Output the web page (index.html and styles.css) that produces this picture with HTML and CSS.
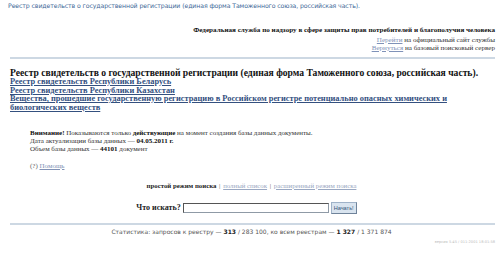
FILE: index.html
```html
<!DOCTYPE html>
<html lang="ru">
<head>
  <meta charset="UTF-8" />
  <title>Реестр свидетельств о государственной регистрации</title>
  <link rel="stylesheet" href="styles.css">
</head>
<body>
  <div class="top-title">Реестр свидетельств о государственной регистрации (единая форма Таможенного союза, российская часть).</div>

  <div class="service">
    <div class="service-name">Федеральная служба по надзору в сфере защиты прав потребителей и благополучия человека</div>
    <div><a href="#">Перейти</a> на официальный сайт службы</div>
    <div><a href="#">Вернуться</a> на базовый поисковый сервер</div>
  </div>

  <hr class="rule">

  <h1>Реестр свидетельств о государственной регистрации (единая форма Таможенного союза, российская часть).</h1>
  <div class="registers">
    <a href="#">Реестр свидетельств Республики Беларусь</a><br>
    <a href="#">Реестр свидетельств Республики Казахстан</a><br>
    <a href="#">Вещества, прошедшие государственную регистрацию в Российском регистре потенциально опасных химических и биологических веществ</a>
  </div>

  <div class="info">
    <div><b>Внимание!</b> Показываются только <b>действующие</b> на момент создания базы данных документы.</div>
    <div>Дата актуализации базы данных — <b>04.05.2011 г.</b></div>
    <div>Объем базы данных — <b>44101</b> документ</div>
  </div>

  <div class="help">(?) <a href="#">Помощь</a></div>

  <div class="modes">
    <b>простой режим поиска</b> <span class="sep">|</span> <a href="#">полный список</a> <span class="sep">|</span> <a href="#">расширенный режим поиска</a>
  </div>

  <form class="search">
    <label for="q">Что искать?</label>
    <input type="text" id="q">
    <button type="button">Начать!</button>
  </form>

  <hr class="rule rule-bottom">

  <div class="stats">Статистика: запросов к реестру — <b>313</b> / 283 100, ко всем реестрам — <b>1 327</b> / 1 371 874</div>
  <div class="version">версия 5.45 / 011-2001 18:01:58</div>
</body>
</html>
```

FILE: styles.css
```css
body {
  margin: 0;
  padding: 0 5px 0 8px;
  font-family: "Liberation Serif", serif;
  color: #222;
  background: #fff;
}
a {
  color: #3a5580;
}
.top-title {
  font-family: "DejaVu Sans", sans-serif;
  font-size: 6.2px;
  line-height: 8px;
  color: #3d6897;
  padding-top: 2px;
  letter-spacing: -0.1px;
}
.service {
  text-align: right;
  font-size: 7.1px;
  line-height: 8px;
  margin-top: 16px;
  color: #333;
}
.service a {
  color: #7f92b8;
}
.service-name {
  font-weight: bold;
  color: #111;
  margin-bottom: 2px;
}
.rule {
  border: none;
  border-top: 2px solid #cdd8e3;
  margin: 5px 0 0 2px;
}
h1 {
  font-size: 9.6px;
  margin: 9px 0 0 2px;
  line-height: 10px;
  color: #111;
}
.registers {
  margin-left: 2px;
  font-size: 8.4px;
  line-height: 8.5px;
  font-weight: bold;
  padding-right: 30px;
}
.registers a {
  color: #34507f;
}
.info {
  margin: 17px 0 0 22px;
  font-size: 7px;
  line-height: 8.2px;
  color: #333;
}
.info b {
  color: #111;
}
.help {
  margin: 8px 0 0 22px;
  font-size: 7px;
  color: #666;
}
.help a {
  color: #8192b5;
}
.modes {
  text-align: center;
  font-size: 6.8px;
  margin-top: 12px;
}
.modes a {
  color: #9aa8c2;
}
.modes .sep {
  color: #555;
  margin: 0 1px;
}
.search {
  display: flex;
  justify-content: center;
  align-items: center;
  gap: 2px;
  margin: 13px 10px 0 0;
}
.search label {
  font-weight: bold;
  font-size: 8px;
  color: #222;
}
.search input {
  width: 144px;
  height: 8px;
  padding: 0;
  border: 1px solid #8f9aa6;
  border-top-color: #555;
  border-left-color: #555;
}
.search button {
  font-family: "Liberation Sans", sans-serif;
  font-size: 5.6px;
  padding: 0 2px;
  height: 12px;
  background: #d9e4ef;
  color: #34557a;
  border: 1px solid #9fb2c8;
  border-right-color: #6f839a;
  border-bottom-color: #6f839a;
}
.rule-bottom {
  margin-top: 9px;
}
.stats {
  text-align: center;
  font-family: "DejaVu Sans", sans-serif;
  font-size: 6px;
  color: #555;
  margin-top: 3px;
}
.stats b {
  color: #222;
}
.version {
  text-align: right;
  font-family: "DejaVu Sans", sans-serif;
  font-size: 3.6px;
  color: #bbb;
  margin-top: 5px;
}
```
